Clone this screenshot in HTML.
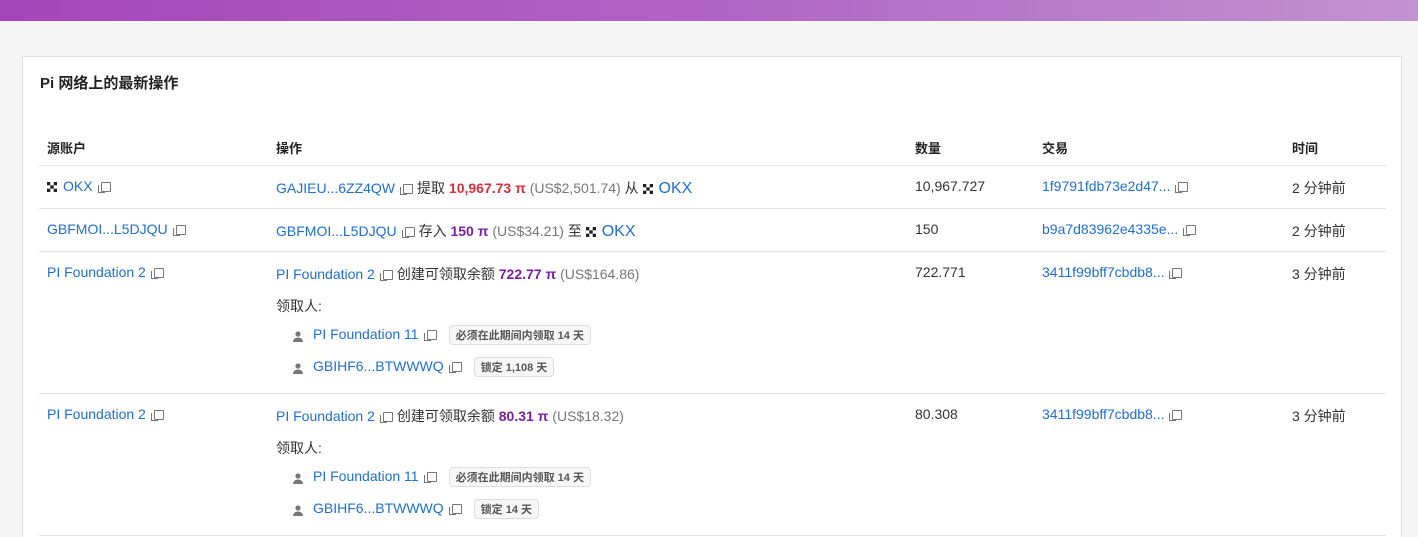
<!DOCTYPE html><html><head><meta charset="utf-8"><style>
*{margin:0;padding:0;box-sizing:border-box}
html,body{width:1418px;height:537px;overflow:hidden}
body{background:#f5f5f5;font-family:"Liberation Sans","Noto Sans CJK SC",sans-serif;font-size:14px;color:#333;position:relative}
.bar{height:21px;background:linear-gradient(90deg,#a546bc,#b064c4 50%,#c392d1)}
.card{position:absolute;left:22px;top:56px;width:1380px;height:490px;background:#fff;border:1px solid #ddd}
h2{position:absolute;left:17px;top:15px;font-size:15px;font-weight:bold;color:#222}
.tbl{position:absolute;left:16px;top:0;width:1347px}
.row{position:absolute;left:0;width:1347px;border-bottom:1px solid #e3e3e3}
.c{position:absolute;white-space:nowrap}
a{color:#1f6fd1;text-decoration:none}
.cp{display:inline-block;width:10px;height:10px;border:1px solid #777;border-radius:1px;margin:0 4px 0 8px;position:relative;vertical-align:-1px;background:#fff}
.cp:before{content:"";position:absolute;left:-4px;top:2px;width:6px;height:7px;border-left:1px solid #777;border-bottom:1px solid #777}
.g{color:#777}.red{color:#d32f3f;font-weight:bold}.pu{color:#7b1fa2;font-weight:bold}
.x{display:inline-block;width:10px;height:10px;margin-right:6px;vertical-align:-1px}
.tag{display:inline-block;border:1px solid #ddd;border-radius:4px;background:#f7f7f7;font-size:11px;color:#555;padding:1px 6px;margin-left:8px;font-weight:bold}
.u{display:inline-block;width:12px;margin-right:9px;vertical-align:-3px}
.big{font-size:16px}
</style></head><body><div class="bar"></div>
<svg width="0" height="0" style="position:absolute"><defs><symbol id="ok" viewBox="0 0 10 10"><rect x="0" y="0" width="3.3" height="3.3" fill="#222"/><rect x="6.7" y="0" width="3.3" height="3.3" fill="#222"/><rect x="3.3" y="3.3" width="3.4" height="3.4" fill="#222"/><rect x="0" y="6.7" width="3.3" height="3.3" fill="#222"/><rect x="6.7" y="6.7" width="3.3" height="3.3" fill="#222"/></symbol><symbol id="us" viewBox="0 0 12 12"><circle cx="6" cy="4" r="2.6" fill="#777"/><path d="M1 12c0-3 2.5-4.5 5-4.5s5 1.5 5 4.5z" fill="#777"/></symbol></defs></svg>
<div class="card"><h2>Pi 网络上的最新操作</h2>
<div class="tbl">
<div class="row" style="top:70px;height:39px;font-weight:bold;font-size:13px;color:#222"><span class="c" style="left:8px;top:11px">源账户</span><span class="c" style="left:237px;top:11px">操作</span><span class="c" style="left:876px;top:11px">数量</span><span class="c" style="left:1003px;top:11px">交易</span><span class="c" style="left:1253px;top:11px">时间</span></div>
<div class="row" style="top:109px;height:43px"><span class="c" style="left:8px;top:12px"><svg class="x"><use href="#ok"/></svg><a>OKX</a><span class="cp"></span></span><span class="c" style="left:237px;top:12px"><a>GAJIEU...6ZZ4QW</a><span class="cp"></span>提取 <span class="red">10,967.73 π</span> <span class="g">(US$2,501.74)</span> 从 <svg class="x"><use href="#ok"/></svg><a class="big">OKX</a></span><span class="c" style="left:876px;top:12px">10,967.727</span><span class="c" style="left:1003px;top:12px"><a>1f9791fdb73e2d47...</a><span class="cp"></span></span><span class="c" style="left:1253px;top:12px">2 分钟前</span></div>
<div class="row" style="top:152px;height:43px"><span class="c" style="left:8px;top:12px"><a>GBFMOI...L5DJQU</a><span class="cp"></span></span><span class="c" style="left:237px;top:12px"><a>GBFMOI...L5DJQU</a><span class="cp"></span>存入 <span class="pu">150 π</span> <span class="g">(US$34.21)</span> 至 <svg class="x"><use href="#ok"/></svg><a class="big">OKX</a></span><span class="c" style="left:876px;top:12px">150</span><span class="c" style="left:1003px;top:12px"><a>b9a7d83962e4335e...</a><span class="cp"></span></span><span class="c" style="left:1253px;top:12px">2 分钟前</span></div>
<div class="row" style="top:195px;height:142px"><span class="c" style="left:8px;top:12px"><a>PI Foundation 2</a><span class="cp"></span></span><span class="c" style="left:237px;top:12px"><a>PI Foundation 2</a><span class="cp"></span>创建可领取余额 <span class="pu">722.77 π</span> <span class="g">(US$164.86)</span></span><span class="c" style="left:237px;top:44px">领取人:</span><span class="c" style="left:253px;top:73px"><svg class="u" viewBox="0 0 12 12"><use href="#us"/></svg><a>PI Foundation 11</a><span class="cp"></span><span class="tag">必须在此期间内领取 14 天</span></span><span class="c" style="left:253px;top:105px"><svg class="u" viewBox="0 0 12 12"><use href="#us"/></svg><a>GBIHF6...BTWWWQ</a><span class="cp"></span><span class="tag">锁定 1,108 天</span></span><span class="c" style="left:876px;top:12px">722.771</span><span class="c" style="left:1003px;top:12px"><a>3411f99bff7cbdb8...</a><span class="cp"></span></span><span class="c" style="left:1253px;top:12px">3 分钟前</span></div>
<div class="row" style="top:337px;height:142px"><span class="c" style="left:8px;top:12px"><a>PI Foundation 2</a><span class="cp"></span></span><span class="c" style="left:237px;top:12px"><a>PI Foundation 2</a><span class="cp"></span>创建可领取余额 <span class="pu">80.31 π</span> <span class="g">(US$18.32)</span></span><span class="c" style="left:237px;top:44px">领取人:</span><span class="c" style="left:253px;top:73px"><svg class="u" viewBox="0 0 12 12"><use href="#us"/></svg><a>PI Foundation 11</a><span class="cp"></span><span class="tag">必须在此期间内领取 14 天</span></span><span class="c" style="left:253px;top:105px"><svg class="u" viewBox="0 0 12 12"><use href="#us"/></svg><a>GBIHF6...BTWWWQ</a><span class="cp"></span><span class="tag">锁定 14 天</span></span><span class="c" style="left:876px;top:12px">80.308</span><span class="c" style="left:1003px;top:12px"><a>3411f99bff7cbdb8...</a><span class="cp"></span></span><span class="c" style="left:1253px;top:12px">3 分钟前</span></div>
</div></div></body></html>
